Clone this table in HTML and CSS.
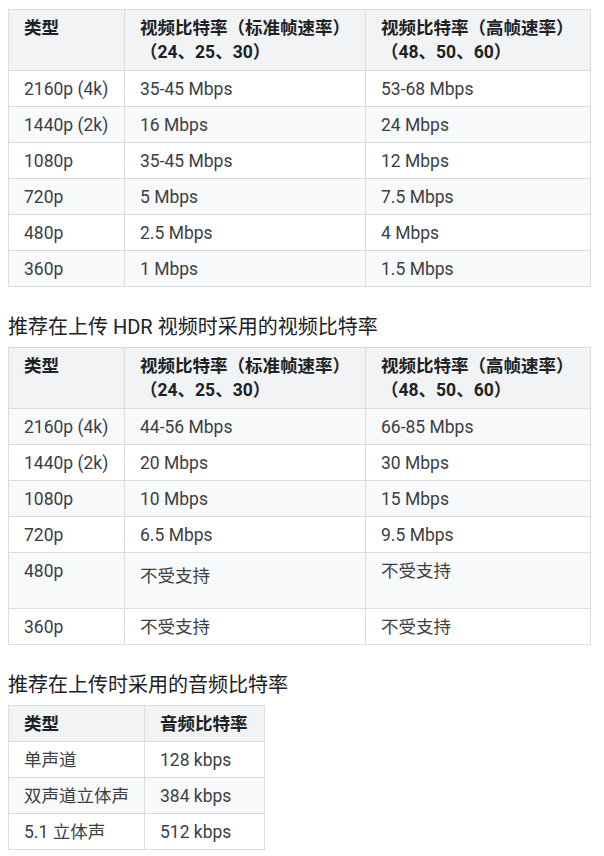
FILE: index.html
```html
<!DOCTYPE html>
<html lang="zh-CN">
<head>
<meta charset="utf-8">
<link rel="stylesheet" href="styles.css">
</head>
<body>
<table class="tbl t3">
  <colgroup><col class="c1"><col class="c2"><col class="c3"></colgroup>
  <thead>
    <tr><th>类型</th><th>视频比特率（标准帧速率）<br>（24、25、30）</th><th>视频比特率（高帧速率）<br>（48、50、60）</th></tr>
  </thead>
  <tbody>
    <tr><td>2160p (4k)</td><td>35-45 Mbps</td><td>53-68 Mbps</td></tr>
    <tr class="alt"><td>1440p (2k)</td><td>16 Mbps</td><td>24 Mbps</td></tr>
    <tr><td>1080p</td><td>35-45 Mbps</td><td>12 Mbps</td></tr>
    <tr class="alt"><td>720p</td><td>5 Mbps</td><td>7.5 Mbps</td></tr>
    <tr><td>480p</td><td>2.5 Mbps</td><td>4 Mbps</td></tr>
    <tr class="alt"><td>360p</td><td>1 Mbps</td><td>1.5 Mbps</td></tr>
  </tbody>
</table>
<p class="caption">推荐在上传 HDR 视频时采用的视频比特率</p>
<table class="tbl t3">
  <colgroup><col class="c1"><col class="c2"><col class="c3"></colgroup>
  <thead>
    <tr><th>类型</th><th>视频比特率（标准帧速率）<br>（24、25、30）</th><th>视频比特率（高帧速率）<br>（48、50、60）</th></tr>
  </thead>
  <tbody>
    <tr class="alt"><td>2160p (4k)</td><td>44-56 Mbps</td><td>66-85 Mbps</td></tr>
    <tr><td>1440p (2k)</td><td>20 Mbps</td><td>30 Mbps</td></tr>
    <tr class="alt"><td>1080p</td><td>10 Mbps</td><td>15 Mbps</td></tr>
    <tr><td>720p</td><td>6.5 Mbps</td><td>9.5 Mbps</td></tr>
    <tr class="alt tall"><td>480p</td><td class="shift">不受支持</td><td>不受支持</td></tr>
    <tr><td>360p</td><td>不受支持</td><td>不受支持</td></tr>
  </tbody>
</table>
<p class="caption">推荐在上传时采用的音频比特率</p>
<table class="tbl t2">
  <colgroup><col class="a1"><col class="a2"></colgroup>
  <thead>
    <tr><th>类型</th><th>音频比特率</th></tr>
  </thead>
  <tbody>
    <tr><td>单声道</td><td>128 kbps</td></tr>
    <tr class="alt"><td>双声道立体声</td><td>384 kbps</td></tr>
    <tr><td>5.1 立体声</td><td>512 kbps</td></tr>
  </tbody>
</table>
</body>
</html>
```

FILE: styles.css
```css
html, body {
  margin: 0;
  padding: 0;
  background: #ffffff;
}
body {
  padding: 9px 8px 8px;
  font-family: Roboto, "Noto Sans CJK SC", sans-serif;
  color: #3c4043;
}
.tbl {
  border-collapse: collapse;
  table-layout: fixed;
  font-size: 17.5px;
  line-height: 24px;
}
.t3 { width: 582px; }
.t3 .c1 { width: 116px; }
.t3 .c2 { width: 241px; }
.t3 .c3 { width: 225px; }
.t2 { width: 256px; }
.t2 .a1 { width: 136px; }
.t2 .a2 { width: 120px; }
.tbl th, .tbl td {
  border: 1px solid #dadce0;
  text-align: left;
  vertical-align: top;
  padding: 6px 15px 5px;
}
.tbl th {
  background: #f1f3f4;
  font-weight: 700;
  color: #202124;
  white-space: nowrap;
  padding: 6px 15px 6px;
}
.t2 th { padding: 6px 15px 5px; }
.tbl tr.alt td { background: #f8f9fa; }
.tbl tr.tall td { height: 44px; }
.tbl tr.tall td.shift { padding-top: 11px; height: 39px; }
.caption {
  margin: 26px 0 6px;
  font-size: 20px;
  line-height: 28px;
  color: #202124;
}
```
